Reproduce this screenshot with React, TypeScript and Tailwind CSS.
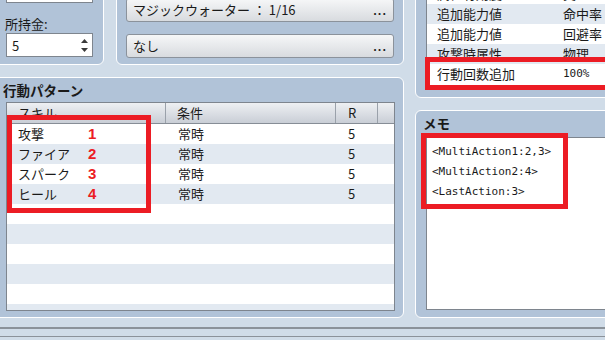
import React from 'react';

const skills = [
  { name: '攻撃', no: '1' },
  { name: 'ファイア', no: '2' },
  { name: 'スパーク', no: '3' },
  { name: 'ヒール', no: '4' },
];

const traits = [
  { kind: '属性有効度', value: '炎' },
  { kind: '追加能力値', value: '命中率' },
  { kind: '追加能力値', value: '回避率' },
  { kind: '攻撃時属性', value: '物理' },
  { kind: '行動回数追加', value: '100%', mono: true },
];

const memo = ['<MultiAction1:2,3>', '<MultiAction2:4>', '<LastAction:3>'];

function Spinner({ value }: { value?: string }) {
  return (
    <div className="flex h-[24px] w-[87px] shrink-0 items-center justify-between border border-[#7e858e] bg-white pl-[5px] pr-[4px]">
      <span className="text-[13px] leading-none">{value}</span>
      <svg width="7" height="22" viewBox="0 0 7 22" className="text-[#3a3a3a]">
        <path d="M3.5 5 L7 9 H0 Z" fill="currentColor" />
        <path d="M3.5 18 L7 14 H0 Z" fill="currentColor" />
      </svg>
    </div>
  );
}

function PickButton({ label }: { label: string }) {
  return (
    <div className="flex h-[24px] shrink-0 items-center justify-between rounded-[3px] border border-[#8b929b] bg-linear-to-b from-[#f6f7f8] to-[#d8dbdf] pl-[6px] pr-[6px] text-[13px]">
      <span className="whitespace-pre">{label}</span>
      <span className="text-[11px] font-bold tracking-[1px]">...</span>
    </div>
  );
}

export default function App() {
  return (
    <div className="relative h-[340px] w-[605px] overflow-hidden bg-[#d0dce8] font-['Noto_Sans_CJK_JP',sans-serif] text-[#1a1a1a]">
      <div className="-ml-[10px] -mt-[10px] flex w-[625px]">
        {/* left column */}
        <div className="flex w-[414px] flex-col">
          <div className="flex h-[75px] gap-[12px]">
            <div className="flex w-[114px] flex-col justify-end rounded-[6px] border border-white bg-[#b1c3d8] pb-[7px] pl-[15px]">
              <Spinner />
              <div className="mt-[11px] h-[19px] shrink-0 -ml-[1px] text-[13px] leading-[19px]">所持金:</div>
              <Spinner value="5" />
            </div>
            <div className="flex w-[288px] flex-col justify-end gap-[12px] rounded-[6px] border border-white bg-[#b1c3d8] px-[9px] pb-[6px]">
              <PickButton label="マジックウォーター ： 1/16" />
              <PickButton label="なし" />
            </div>
          </div>

          <div className="mt-[12px] flex h-[241px] flex-col rounded-[6px] border border-white bg-[#b1c3d8] pl-[12px] pt-[2px]">
            <div className="h-[20px] text-[13.5px] font-bold leading-[20px]">行動パターン</div>
            <div className="ml-[3px] mt-[2px] h-[209px] w-[389px] overflow-hidden border border-[#7e858e] bg-white text-[13px]">
              <div className="flex h-[21px] border-b border-[#868d96] bg-linear-to-b from-[#eef0f3] to-[#c9ced6] leading-[20px]">
                <div className="w-[159px] border-r border-[#9aa1aa] pl-[11px]">スキル</div>
                <div className="w-[170px] border-r border-[#9aa1aa] pl-[11px]">条件</div>
                <div className="w-[42px] border-r border-[#9aa1aa] pl-[12px]">R</div>
                <div className="w-[16px]" />
              </div>
              {Array.from({ length: 10 }).map((_, i) => {
                const s = skills[i];
                return (
                  <div key={i} className={`flex h-[20px] items-center leading-[20px] ${i % 2 === 1 ? 'bg-[#e2e9f1]' : 'bg-white'}`}>
                    <div className="flex w-[159px] pl-[11px]">
                      {s && <span className="w-[70px]">{s.name}</span>}
                      {s && <span className="font-['Liberation_Sans',sans-serif] text-[15px] font-bold text-[#ec1c24]">{s.no}</span>}
                    </div>
                    <div className="w-[170px] pl-[12px]">{s ? '常時' : ''}</div>
                    <div className="w-[42px] pl-[12px]">{s ? '5' : ''}</div>
                  </div>
                );
              })}
            </div>
          </div>
        </div>

        {/* right column */}
        <div className="ml-[11px] flex w-[200px] flex-col">
          <div className="flex h-[108px] flex-col rounded-[6px] border border-white bg-[#b1c3d8] pb-[7px] pl-[10px]">
            <div className="flex flex-1 flex-col justify-end overflow-hidden border-b border-l border-[#7e858e] bg-white pb-[5px] text-[13px]">
              {traits.map((t, i) => (
                <div key={i} className={`flex h-[20px] shrink-0 items-center leading-[20px] ${i % 2 === 1 ? 'bg-[#e2e9f1]' : 'bg-white'}`}>
                  <span className="w-[136px] pl-[10px]">{t.kind}</span>
                  <span className={t.mono ? "font-['DejaVu_Sans_Mono',monospace] text-[11px]" : ''}>{t.value}</span>
                </div>
              ))}
            </div>
          </div>

          <div className="mt-[12px] flex h-[208px] flex-col rounded-[6px] border border-white bg-[#b1c3d8] pb-[7px] pl-[7px] pt-[2px]">
            <div className="h-[20px] text-[13.5px] font-bold leading-[20px]">メモ</div>
            <div className="ml-[3px] mt-[4px] flex-1 border-b border-l border-t border-[#7e858e] bg-white pl-[5px] pt-[4px] font-['DejaVu_Sans_Mono',monospace] text-[11px] leading-[20px]">
              {memo.map(line => (
                <div key={line}>{line}</div>
              ))}
            </div>
          </div>
        </div>
      </div>

      {/* status strip */}
      <div className="mt-[9px] h-[2px] bg-[#8b929a]" />
      <div className="mt-[7px] h-[1px] bg-[#8b929a]" />

      {/* red annotation boxes */}
      <div className="absolute left-[7px] top-[115px] h-[98px] w-[144px] border-[5px] border-[#ec1c24]" />
      <div className="absolute left-[425px] top-[57px] h-[33px] w-[190px] border-[5px] border-[#ec1c24]" />
      <div className="absolute left-[421px] top-[133px] h-[76px] w-[147px] border-[5px] border-[#ec1c24]" />
    </div>
  );
}
